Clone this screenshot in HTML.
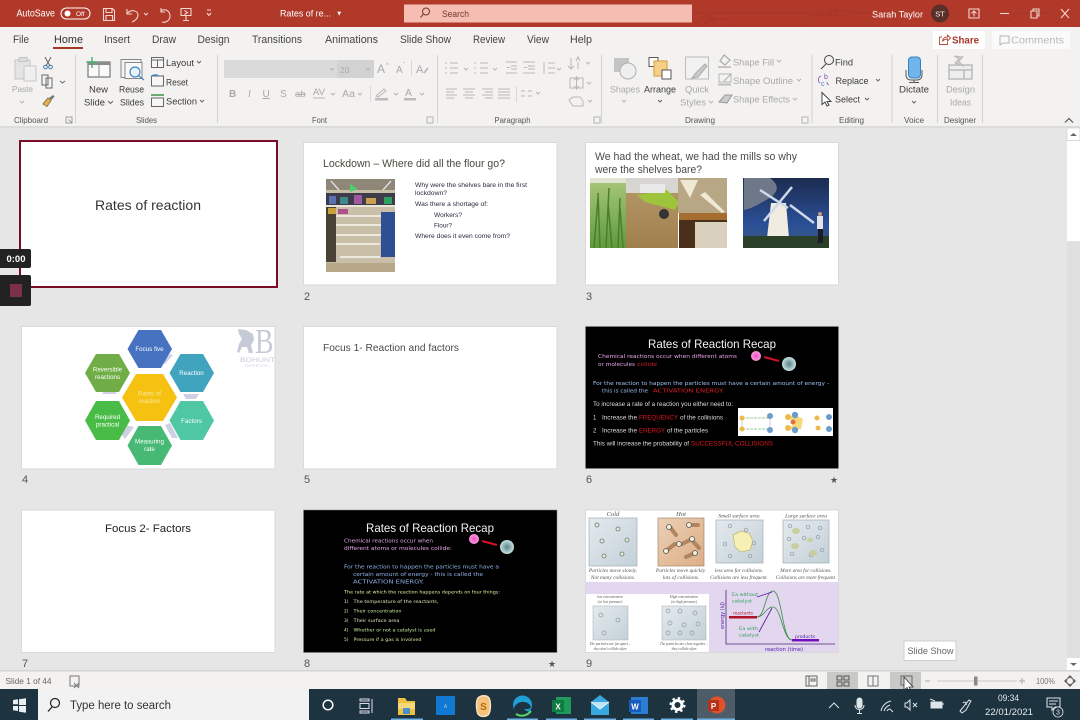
<!DOCTYPE html>
<html lang="en"><head><meta charset="utf-8"><title>Rates of reaction</title>
<style>
html,body{margin:0;padding:0;width:1080px;height:720px;overflow:hidden;background:#e6e6e6}
svg{display:block;filter:blur(.3px)}
text{font-family:"Liberation Sans",Arial,sans-serif;font-size:10.5px;fill:#444}
.w text,text.w{fill:#fff}
.lbl{font-size:8.5px;fill:#555}
.g{fill:#a9a9a9}
.d{fill:#3c3c3c}
.tab{font-size:10.8px;fill:#444}
.c{font-family:"DejaVu Sans",sans-serif;font-size:5.2px}
.ar{font-size:6px;fill:#ddd}
.ser{font-family:"Liberation Serif",serif;font-style:italic;font-size:6.5px;fill:#555}
.ico{fill:none;stroke:#666;stroke-width:1}
.gi{fill:none;stroke:#b5b5b5;stroke-width:1}
.hx{font-size:6.2px;fill:#fff;text-anchor:middle}
</style></head><body>
<svg width="1080" height="720" viewBox="0 0 1080 720" xmlns="http://www.w3.org/2000/svg">
<defs>
<linearGradient id="pb" x1="0" y1="0" x2="1" y2="1"><stop offset="0" stop-color="#e4eaee"/><stop offset="1" stop-color="#c3d0d7"/></linearGradient>
<linearGradient id="hot" x1="0" y1="0" x2="1" y2="1"><stop offset="0" stop-color="#eccfb5"/><stop offset="1" stop-color="#dcae86"/></linearGradient>
<linearGradient id="sky" x1="0" y1="0" x2="0" y2="1"><stop offset="0" stop-color="#1c2c50"/><stop offset=".65" stop-color="#2a4f97"/><stop offset="1" stop-color="#3a5a80"/></linearGradient>
<linearGradient id="whe" x1="0" y1="0" x2="0" y2="1"><stop offset="0" stop-color="#a9c77a"/><stop offset="1" stop-color="#5f9a3c"/></linearGradient>
<linearGradient id="fld" x1="0" y1="0" x2="0" y2="1"><stop offset="0" stop-color="#b59a6a"/><stop offset="1" stop-color="#a07f4c"/></linearGradient>
<radialGradient id="pk"><stop offset="0" stop-color="#f04fc0"/><stop offset="1" stop-color="#f79ae0"/></radialGradient>
<radialGradient id="bl"><stop offset="0" stop-color="#5b8288"/><stop offset="1" stop-color="#c5e2e0"/></radialGradient>
</defs>
<rect width="1080" height="720" fill="#e6e6e6"/>

<!-- title bar -->
<rect width="1080" height="27" fill="#b0392a"/>
<g fill="none" stroke="#a83528" stroke-width="1"><path d="M692 13H830l3-3h14l3 3h70M700 27l10-8h16l8 8M800 27l14-12h30M1000 27l18-14h30l14-13"/><circle cx="706" cy="24" r="8"/><circle cx="833" cy="11" r="4"/></g>
<g class="w">
<text x="16.5" y="16.5" style="font-size:10px" textLength="38.5">AutoSave</text>
<rect x="61" y="8" width="29" height="11" rx="5.5" fill="none" stroke="#fff"/><circle cx="67.500" cy="13.500" r="3" fill="#fff"/>
<text x="76" y="16" style="font-size:6.5px">Off</text>
<text x="280" y="16.5" style="font-size:9.5px" textLength="51">Rates of re...</text>
<text x="336" y="15.5" style="font-size:6.500px">▼</text>
<text x="872" y="17.5" style="font-size:9.5px" textLength="51">Sarah Taylor</text>
</g>
<g fill="none" stroke="#f2d6d0" stroke-width="1.1">
<path d="M103.500 8.500h9l2 2v10h-11zM106 8.500v4h6v-4M106 20.500v-5h6.500v5"/>
<path d="M127 9v5h5M127 14c3-5 11-4 11 1 0 3-3 6-6 7"/><path d="M144 13l2 2 2-2"/>
<path d="M167 11c-4-3-9 0-9 5s5 7 8 6M167 8v4h-4" transform="matrix(-1 0 0 1 328 0)"/>
<path d="M181 8.500h10v7h-10zM186 15.500v5M183 20.500h6M184.500 10.500l3 2-3 2"/>
<path d="M207 13l2 2.500 2-2.500M207 10h4"/>
<path d="M969 9h10v9h-10zM974 16.500v-5M971.500 13.500l2.500-2.500 2.500 2.500"/>
<path d="M1000 13.500h9"/>
<path d="M1031 11h6v7h-6zM1033 11V9h6v7h-2"/>
<path d="M1061 9l8 9M1069 9l-8 9"/>
</g>
<circle cx="940" cy="13.500" r="9" fill="#5a2f28"/><text x="940" y="16.500" text-anchor="middle" style="font-size:7.5px;fill:#eee">ST</text>
<rect x="404" y="4.500" width="288" height="18" fill="#f6bdb2"/>
<g fill="none" stroke="#6e3a30" stroke-width="1"><circle cx="426" cy="11.500" r="3.500"/><path d="M423.500 14l-3 3.500"/></g>
<text x="442" y="17" style="font-size:9.500px;fill:#6b3b33" textLength="27">Search</text>

<!-- ribbon -->
<rect y="27" width="1080" height="100" fill="#f3f2f0"/>
<rect y="126" width="1080" height="2" fill="#dcdcd8"/>
<text class="tab" x="13" y="43" textLength="16">File</text>
<text class="tab" x="54" y="43" textLength="29" style="fill:#333">Home</text>
<rect x="53" y="47" width="30" height="2" fill="#a4372a"/>
<text class="tab" x="104" y="43" textLength="26">Insert</text>
<text class="tab" x="152" y="43" textLength="24">Draw</text>
<text class="tab" x="197.500" y="43" textLength="32">Design</text>
<text class="tab" x="252" y="43" textLength="50">Transitions</text>
<text class="tab" x="325" y="43" textLength="53">Animations</text>
<text class="tab" x="400" y="43" textLength="51">Slide Show</text>
<text class="tab" x="473" y="43" textLength="32">Review</text>
<text class="tab" x="527" y="43" textLength="22">View</text>
<text class="tab" x="570" y="43" textLength="22">Help</text>
<rect x="933" y="31" width="52" height="18" fill="#fff"/>
<path d="M939.500 37h2.500M939.500 37v7.500h8v-2.500M942.500 41c0-2.500 2.500-4 5-4v-2l3 3-3 3v-2c-2 0-3.500 .8-5 2z" fill="none" stroke="#b4493a" stroke-width=".9"/>
<text x="952" y="43.500" style="font-size:10.500px;fill:#a9362a;font-weight:bold" textLength="27">Share</text>
<rect x="992" y="31" width="78" height="18" fill="#fafafa"/>
<path d="M1000 36h9v7h-6l-3 2z" class="gi"/>
<text x="1011" y="43.500" style="font-size:10.500px;fill:#b9b9b9" textLength="53">Comments</text>
<g fill="#d3d3d0"><rect x="75" y="55" width="1" height="68"/><rect x="217" y="55" width="1" height="68"/><rect x="437" y="55" width="1" height="68"/><rect x="601" y="55" width="1" height="68"/><rect x="811.500" y="55" width="1" height="68"/><rect x="891.500" y="55" width="1" height="68"/><rect x="937" y="55" width="1" height="68"/><rect x="982" y="55" width="1" height="68"/></g>

<!-- clipboard -->
<path d="M15 60h15v19H15z" fill="#e4e4e4" stroke="#c5c5c5"/><rect x="19" y="57.500" width="8" height="4" fill="#dcdcdc" stroke="#c5c5c5"/><rect x="24" y="66" width="12" height="15" fill="#efefef" stroke="#c5c5c5"/>
<text class="g" x="12" y="92" style="font-size:8.500px" textLength="21">Paste</text>
<path d="M20 101l2 2 2-2" class="gi"/>
<path d="M45 57l5 9M51 57l-5 9" fill="none" stroke="#666"/><circle cx="45.500" cy="67" r="1.800" fill="none" stroke="#4a78b0"/><circle cx="50.500" cy="67" r="1.800" fill="none" stroke="#4a78b0"/>
<path d="M42 75h6v10h-6zM46 78h6v10h-6z" fill="#f5f5f5" stroke="#666"/>
<path d="M60 81l2.500 2 2.500-2" class="ico"/>
<path d="M43 104l5-6 3 2.500-4 6z" fill="#e8b34a" stroke="#8a7a50"/><path d="M49 98l4-3 1.500 1.500-3 3.500z" fill="#777"/>
<text class="lbl" x="14" y="123" textLength="34">Clipboard</text>
<path d="M66 117h6v6h-6zM68.500 119.500l3 3" fill="none" stroke="#888" stroke-width=".8"/>

<!-- slides -->
<rect x="88" y="62" width="22" height="15" fill="#fafafa" stroke="#777" stroke-width="1.200"/><rect x="88" y="62" width="22" height="3" fill="#8c8c8c"/><path d="M99 65v12" stroke="#888"/>
<path d="M92 57v11M86.500 62h11" stroke="#4cae6e" stroke-width="1.400"/>
<text class="d" x="89" y="92.500" style="font-size:9px" textLength="19">New</text>
<text class="d" x="84" y="105.500" style="font-size:9px" textLength="21">Slide</text><path d="M108 101l2.500 2.500 2.500-2.500" class="ico"/>
<rect x="121" y="59.500" width="20" height="18" fill="#f4f4f4" stroke="#888"/><rect x="125" y="62.500" width="17" height="16" fill="#fafafa" stroke="#888"/>
<circle cx="135" cy="72" r="5" fill="#eaf3fa" stroke="#3f86c4" stroke-width="1.200"/><path d="M139 76l5 4" stroke="#3f86c4" stroke-width="1.200"/>
<text class="d" x="119" y="92.500" style="font-size:9px" textLength="25">Reuse</text>
<text class="d" x="120" y="105.500" style="font-size:9px" textLength="24">Slides</text>
<rect x="151.500" y="57.500" width="12" height="10" fill="#f6f6f6" stroke="#666"/><path d="M151.500 60h12M157.500 60v7.500" stroke="#666"/>
<text class="d" x="166" y="66" style="font-size:9px" textLength="28">Layout</text><path d="M197 61l2 2 2-2" class="ico"/>
<rect x="151.500" y="76" width="12" height="10" fill="#f6f6f6" stroke="#666"/><path d="M151 77a5 4 0 0 1 8-1" stroke="#3f86c4" fill="none" stroke-width="1.200"/>
<text class="d" x="166" y="85.500" style="font-size:9px" textLength="22">Reset</text>
<rect x="151.500" y="98" width="12" height="8.500" fill="#f6f6f6" stroke="#666"/><rect x="151" y="94" width="13" height="2" fill="#6aaa70"/>
<text class="d" x="166" y="104.500" style="font-size:9px" textLength="31">Section</text><path d="M200 100l2 2 2-2" class="ico"/>
<text class="lbl" x="136" y="123" textLength="21">Slides</text>

<!-- font -->
<rect x="224" y="60" width="113" height="18" fill="#dadada"/><rect x="337" y="60" width="37" height="18" fill="#d2d2d2"/>
<path d="M330 68l2 2 2-2M366 68l2 2 2-2" class="gi"/>
<text x="340" y="73" style="font-size:8.500px;fill:#aaa">20</text>
<text class="g" x="377" y="73" style="font-size:12px">A</text><text class="g" x="386" y="67" style="font-size:6px">^</text><text class="g" x="396" y="73" style="font-size:10px">A</text><text class="g" x="403" y="67" style="font-size:6px">ˇ</text><text class="g" x="416" y="73" style="font-size:11px">A</text>
<path d="M424 73l4-5" stroke="#c2a9c8" stroke-width="1.500"/><rect x="411" y="60" width="1" height="16" fill="#d8d8d8"/>
<text class="g" x="229" y="97" style="font-size:10px;font-weight:bold">B</text><text class="g" x="248" y="97" style="font-size:10px;font-style:italic">I</text><text class="g" x="262.500" y="97" style="font-size:10px;text-decoration:underline">U</text><text class="g" x="280" y="97" style="font-size:10px">S</text><text class="g" x="295" y="97" style="font-size:9.500px;text-decoration:line-through">ab</text><text class="g" x="313" y="95" style="font-size:9.500px">AV</text><text class="g" x="342" y="97" style="font-size:10px" textLength="13">Aa</text>
<path d="M313 98h12M331 93l2 2 2-2M358 93l2 2 2-2M394 93l2 2 2-2M420 93l2 2 2-2" class="gi"/>
<rect x="370" y="86" width="1" height="16" fill="#d8d8d8"/>
<path d="M376 96l8-7 2 2-8 6z" class="gi"/><rect x="375" y="98" width="13" height="2.500" fill="#bcbcbc"/>
<text class="g" x="405" y="96" style="font-size:10.500px">A</text><rect x="404" y="98" width="12" height="2.500" fill="#bcbcbc"/>
<text class="lbl" x="312" y="123" textLength="15">Font</text>
<path d="M427 117h6v6h-6z" class="gi"/>

<!-- paragraph -->
<g fill="none" stroke="#b8b8b8">
<path d="M450 63h8M450 68h8M450 73h8M445 63h2M445 68h2M445 73h2M464 68l2 2 2-2"/>
<path d="M480 63h8M480 68h8M480 73h8M474 63h2M474 68h2M474 73h2M493 68l2 2 2-2"/>
<path d="M506 62h11M511 66h6M511 69h6M506 73h11M507 67.500h3"/>
<path d="M523 62h12M528 66h7M528 69h7M523 73h12M524 67.500h3"/>
<path d="M548 63h7M548 68h7M548 73h7M544 62v12M557 68l2 2 2-2"/>
<path d="M571 58v11M568 66l3 3 3-3M578 62v7M586 62l2 2 2-2M576 61l2-4 2 4"/>
<path d="M570 78h13v10h-13zM576.500 76v14M574 80l2.500-2 2.500 2M574 86l2.500 2 2.500-2M587 82l2 2 2-2"/>
<path d="M569 100l4-3h7l3 4v5h-10zM588 100l2 2 2-2"/>
<path d="M446 89h11M446 92h8M446 95h11M446 98h8"/>
<path d="M463 89h12M465 92h8M463 95h12M465 98h8"/>
<path d="M482 89h11M485 92h8M482 95h11M485 98h8"/>
<path d="M498 89h12M498 92h12M498 95h12M498 98h12"/>
<path d="M521 91h4M528 91h4M521 96h4M528 96h4M536 92l2 2 2-2"/>
</g>
<rect x="516" y="86" width="1" height="16" fill="#d8d8d8"/>
<text class="lbl" x="494.500" y="123" textLength="36">Paragraph</text>
<path d="M594 117h6v6h-6z" class="gi"/>

<!-- drawing -->
<rect x="614" y="58" width="15" height="14" fill="#c4c4c4"/><circle cx="628" cy="71" r="8" fill="#efefef" stroke="#b0b0b0"/>
<text class="g" x="610" y="92.500" style="font-size:9px" textLength="30">Shapes</text><path d="M622 100l2 2 2-2" class="gi"/>
<rect x="649" y="57.500" width="9" height="9" fill="#fff" stroke="#555"/><rect x="654" y="61" width="13" height="15" fill="#f6cf86" stroke="#d59b3a"/><rect x="662" y="70" width="9" height="9" fill="#fff" stroke="#555"/>
<text class="d" x="644" y="92.500" style="font-size:9px" textLength="32">Arrange</text><path d="M658 100l2 2 2-2" class="ico"/>
<rect x="685.500" y="57" width="23" height="22" fill="#f2f2f2" stroke="#bbb"/><path d="M692 78l3-4 10-10 2 2-9 11z" fill="#ccc" stroke="#aaa"/>
<text class="g" x="685" y="92.500" style="font-size:9px" textLength="24">Quick</text><text class="g" x="680" y="105.500" style="font-size:9px" textLength="26">Styles</text><path d="M709 101l2 2 2-2" class="gi"/>
<path d="M724 55l6 5-5 5-5-4zM718 67h13" fill="none" stroke="#aaa" stroke-width="1.200"/>
<text class="g" x="733" y="65.500" style="font-size:9px" textLength="41">Shape Fill</text><path d="M777 60l2 2 2-2" class="gi"/>
<rect x="719" y="74" width="12" height="8" class="gi"/><path d="M724 81l7-7" stroke="#aaa"/><rect x="718" y="83.500" width="13" height="2" fill="#bdbdbd"/>
<text class="g" x="733" y="84" style="font-size:9px" textLength="60">Shape Outline</text><path d="M797 79l2 2 2-2" class="gi"/>
<path d="M719 102l6-7h7l-5 8z" fill="#ccc" stroke="#999"/>
<text class="g" x="733" y="102.500" style="font-size:9px" textLength="57">Shape Effects</text><path d="M793 98l2 2 2-2" class="gi"/>
<text class="lbl" x="685" y="123" textLength="30">Drawing</text>
<path d="M802 117h6v6h-6z" class="gi"/>

<!-- editing -->
<circle cx="829" cy="60" r="4.500" fill="none" stroke="#444"/><path d="M826 64l-5 5" stroke="#444"/>
<text class="d" x="835" y="65.500" style="font-size:9px" textLength="18">Find</text>
<text x="824" y="79" style="font-size:7px;fill:#8a4bb0">b</text><text x="821" y="86" style="font-size:7px;fill:#4a86c0">c</text>
<path d="M821 76a4 4 0 0 0-1 7M827 82a3 3 0 0 0 2 3" stroke="#8a4bb0" fill="none" stroke-width=".8"/>
<text class="d" x="835.500" y="84" style="font-size:9px" textLength="33">Replace</text><path d="M876 79l2 2 2-2" class="ico"/>
<path d="M822 92.500v12l3-2.500 2 4 2-1-2-3.500h4z" fill="#fff" stroke="#444"/>
<text class="d" x="835" y="102.500" style="font-size:9px" textLength="25">Select</text><path d="M865 98l2 2 2-2" class="ico"/>
<text class="lbl" x="839" y="123" textLength="25">Editing</text>

<!-- voice -->
<rect x="908.500" y="57" width="12" height="21" rx="3.500" fill="#6fb4ea" stroke="#3b7fc0"/><path d="M906 70v5c0 3 2 5 5 5h6c3 0 5-2 5-5v-5M914 80v2M909 82.500h10" fill="none" stroke="#555"/>
<text class="d" x="899" y="92.500" style="font-size:9px" textLength="30">Dictate</text><path d="M912 101l2 2 2-2" class="ico"/>
<text class="lbl" x="904" y="123" textLength="20">Voice</text>
<path d="M949 65h23v14h-23zM949 70h23M964 70v9" fill="#eeeeee" stroke="#bbb" stroke-width="1.500"/><path d="M954 56l5 3-4 4 8 3-4-5 4-4z" fill="#ccc" stroke="#bbb"/>
<text class="g" x="946" y="92.500" style="font-size:9px" textLength="29">Design</text><text class="g" x="950" y="105.500" style="font-size:9px" textLength="21">Ideas</text>
<text class="lbl" x="944" y="123" textLength="32">Designer</text>
<path d="M1065 122.500l4-4 4 4" fill="none" stroke="#555" stroke-width="1.200"/>

<!-- scrollbar -->
<rect x="1067" y="128" width="13" height="542" fill="#e0e0e0"/>
<rect x="1067" y="128" width="13" height="12.500" fill="#fff" stroke="#d0d0d0" stroke-width=".7"/>
<path d="M1070 136l3.500-3 3.500 3z" fill="#666"/>
<rect x="1067" y="141" width="13" height="100" fill="#fff"/>
<rect x="1067" y="658" width="13" height="12" fill="#fff"/><path d="M1070 663l3.500 3 3.500-3z" fill="#666"/>

<!-- slide 1 -->
<rect x="20" y="141" width="257" height="146" fill="#fff" stroke="#7b0c26" stroke-width="2"/>
<text x="95" y="210" style="font-size:14px;fill:#333" textLength="106">Rates of reaction</text>

<!-- slide 2 -->
<rect x="303.500" y="142.500" width="253.500" height="142.500" fill="#fff" stroke="#dadada"/>
<text x="323" y="167" style="font-size:11px;fill:#4a4a3c" textLength="182">Lockdown – Where did all the flour go?</text>
<rect x="326" y="179" width="69" height="93" fill="#c9bfa9"/>
<rect x="326" y="179" width="69" height="11" fill="#8f8878"/><path d="M331 181l8 9M391 181l-8 9" stroke="#ddd" stroke-width="1.500"/><path d="M350 184l8 5-8 3z" fill="#4cd070"/>
<rect x="326" y="193" width="69" height="12" fill="#3e3c4a"/>
<rect x="326" y="205" width="69" height="2" fill="#e9e5da"/><rect x="331" y="215" width="58" height="2" fill="#ece8dd"/><rect x="333" y="224" width="54" height="2" fill="#ece8dd"/><rect x="336" y="234" width="47" height="2" fill="#ece8dd"/><rect x="336" y="243" width="44" height="2" fill="#ece8dd"/><rect x="340" y="256" width="40" height="2" fill="#ece8dd"/>
<rect x="326" y="207" width="10" height="55" fill="#4a4136"/><rect x="381" y="212" width="14" height="45" fill="#2f4f93"/>
<rect x="328" y="208" width="8" height="6" fill="#c9a13a"/><rect x="338" y="209" width="10" height="5" fill="#b0508a"/><rect x="329" y="196" width="7" height="8" fill="#5a70b0"/><rect x="340" y="197" width="8" height="7" fill="#3c8a8a"/><rect x="354" y="195" width="8" height="9" fill="#a058a0"/><rect x="366" y="198" width="10" height="6" fill="#c8a050"/><rect x="384" y="197" width="8" height="7" fill="#30a060"/>
<rect x="326" y="263" width="69" height="9" fill="#b8a88a"/>
<text x="415" y="187" style="font-size:6.500px;fill:#2a2a3c" textLength="112">Why were the shelves bare in the first</text>
<text x="415" y="195" style="font-size:6.500px;fill:#2a2a3c" textLength="32">lockdown?</text>
<text x="415" y="206" style="font-size:6.500px;fill:#2a2a3c" textLength="73">Was there a shortage of:</text>
<text x="434" y="217" style="font-size:6.500px;fill:#2a2a3c" textLength="28">Workers?</text>
<text x="434" y="227.500" style="font-size:6.500px;fill:#2a2a3c" textLength="18">Flour?</text>
<text x="415" y="238" style="font-size:6.500px;fill:#2a2a3c" textLength="95">Where does it even come from?</text>
<text x="304" y="300" style="font-size:11px;fill:#555">2</text>

<!-- slide 3 -->
<rect x="585.500" y="142.500" width="253" height="142.500" fill="#fff" stroke="#dadada"/>
<text x="595" y="160" style="font-size:11px;fill:#4a4a4a" textLength="202">We had the wheat, we had the mills so why</text>
<text x="595" y="173" style="font-size:11px;fill:#4a4a4a" textLength="107">were the shelves bare?</text>
<rect x="590" y="178" width="36" height="70" fill="url(#whe)"/>
<path d="M594 248l4-50M600 248l-2-55M606 248l3-60M612 248l-4-45M618 248l2-50M623 248l-3-40" stroke="#487f2c" stroke-width="1.500" fill="none"/>
<rect x="590" y="178" width="36" height="5" fill="#dfe5d2"/>
<rect x="626" y="178" width="52" height="70" fill="url(#fld)"/>
<rect x="626" y="178" width="52" height="15" fill="#d8d6d2"/>
<path d="M637 195l30-5 12 12-4 8-30-8z" fill="#9ec43c"/><rect x="640" y="184" width="25" height="9" fill="#e9e9e9"/><circle cx="664" cy="214" r="5" fill="#333"/>
<rect x="678" y="178" width="49" height="35" fill="#b8a784"/><path d="M680 180l10 18 8-18zM705 192l20 20-3 1-22-18z" fill="#efe8d4"/>
<rect x="679" y="213" width="48" height="35" fill="#4a2f1a"/><rect x="695" y="222" width="32" height="26" fill="#d9d0bd"/><rect x="679" y="213" width="48" height="7" fill="#a66d30"/>
<rect x="743" y="178" width="86" height="70" fill="url(#sky)"/>
<path d="M744 178h26c8 6 10 12 0 20-8 4-16 10-26 12z" fill="#6f7888"/>
<path d="M771 203h15l3 35h-22z" fill="#f1ece2"/>
<path d="M760 190l28 18M792 187l-28 34M790 205l24 18" stroke="#cfd8e8" stroke-width="2.500" fill="none"/>
<rect x="743" y="236" width="86" height="12" fill="#2a4028"/>
<rect x="817" y="216" width="6" height="13" fill="#e4e4e8"/><rect x="818" y="229" width="5" height="14" fill="#1d1d26"/><circle cx="820" cy="214" r="2" fill="#c89a80"/>
<text x="586" y="300" style="font-size:11px;fill:#555">3</text>

<!-- slide 4 -->
<rect x="21.500" y="326.500" width="253.500" height="142.500" fill="#fff" stroke="#dadada"/>
<path d="M162 363l8-9 3 1-8 9zM102 394h15l-3-4h-9zM183 394h16l-3 5h-10zM125 425l9 2-9 12-3-4zM165 425l7 13h6l-8-15z" fill="#c9cbe0" opacity=".9"/>
<text x="255" y="353" style="font-family:'Liberation Serif',serif;font-size:35px;fill:#c6cad6" textLength="18.500">B</text>
<path d="M238 329l8 1 7 4 1 6-3 5 2 8-4 0-2-6-5 0-3 6-2-1 2-8 3-5-3-5z" fill="#c6cad6"/>
<text x="240" y="362" style="font-size:6px;fill:#c6cad6" textLength="35">BOHUNT</text>
<text x="245" y="366.500" style="font-size:3px;fill:#c6cad6" textLength="24">SCHOOL</text>
<polygon points="127.500,349 138.500,330 161,330 172,349 161,368 138.500,368" fill="#4672c1"/>
<polygon points="169.500,373 180.500,354 203,354 214,373 203,392 180.500,392" fill="#41a4bf"/>
<polygon points="85,373 96,354 119,354 130,373 119,392 96,392" fill="#70ad47"/>
<polygon points="122,397.500 136,374 163,374 177,397.500 163,421 136,421" fill="#f5c211"/>
<polygon points="85,420.500 96,401 119,401 130,420.500 119,440 96,440" fill="#49bc47"/>
<polygon points="169.500,420.500 180.500,401 203,401 214,420.500 203,440 180.500,440" fill="#4fc7a5"/>
<polygon points="127.500,445.500 138.500,426 161,426 172,445.500 161,465 138.500,465" fill="#47b975"/>
<text class="hx" x="149.500" y="351">Focus five</text>
<text class="hx" x="191.500" y="375">Reaction</text>
<text class="hx" x="107.500" y="371.500">Reversible</text><text class="hx" x="107.500" y="379">reactions</text>
<text class="hx" x="149.500" y="395.500" style="fill:#fbe79a">Rates of</text><text class="hx" x="149.500" y="403" style="fill:#fbe79a">reaction</text>
<text class="hx" x="107.500" y="419">Required</text><text class="hx" x="107.500" y="426.500">practical</text>
<text class="hx" x="191.500" y="423">Factors</text>
<text class="hx" x="149.500" y="443.500">Measuring</text><text class="hx" x="149.500" y="451">rate</text>
<text x="22" y="483" style="font-size:11px;fill:#555">4</text>

<!-- slide 5 -->
<rect x="303.500" y="326.500" width="253.500" height="142.500" fill="#fff" stroke="#dadada"/>
<text x="323" y="351" style="font-size:10.500px;fill:#4a4a4a" textLength="136">Focus 1- Reaction and factors</text>
<text x="304" y="483" style="font-size:11px;fill:#555">5</text>

<!-- slide 6 -->
<rect x="585.500" y="326.500" width="253" height="142" fill="#000" stroke="#888" stroke-width=".5"/>
<text x="648" y="348" style="font-size:11.800px;fill:#f2f2f2" textLength="128">Rates of Reaction Recap</text>
<text class="c" x="598" y="358" style="fill:#e9a6ea" textLength="139">Chemical reactions occur when different atoms</text>
<text class="c" x="598" y="366" style="fill:#e9a6ea" textLength="37">or molecules</text>
<text class="c" x="637" y="366" style="fill:#d01a2a" textLength="20">collide</text>
<text class="c" x="593" y="385" style="fill:#9cc0f0" textLength="236">For the reaction to happen the particles must have a certain amount of energy -</text>
<text class="c" x="602" y="392.500" style="fill:#9cc0f0" textLength="46">this is called the</text>
<text class="c" x="653" y="392.500" style="fill:#e01a20" textLength="71">ACTIVATION ENERGY.</text>
<text class="ar" x="593" y="406" textLength="140">To increase a rate of a reaction you either need to:</text>
<text class="ar" x="593" y="419.500">1</text><text class="ar" x="602" y="419.500" textLength="35">Increase the</text>
<text class="ar" x="639" y="419.500" style="fill:#e01a20" textLength="39">FREQUENCY</text>
<text class="ar" x="680" y="419.500" textLength="43">of the collisions</text>
<text class="ar" x="593" y="432.500">2</text><text class="ar" x="602" y="432.500" textLength="35">Increase the</text>
<text class="ar" x="639" y="432.500" style="fill:#e01a20" textLength="26">ENERGY</text>
<text class="ar" x="667" y="432.500" textLength="41">of the particles</text>
<text class="ar" x="593" y="445.500" textLength="96">This will increase the probability of</text>
<text class="ar" x="691" y="445.500" style="fill:#e01a20" textLength="82">SUCCESSFUL COLLISIONS</text>
<circle cx="756" cy="356" r="5" fill="url(#pk)"/><circle cx="789" cy="364" r="7" fill="url(#bl)"/>
<path d="M764 357l15 4" stroke="#d4102a" stroke-width="2"/>
<rect x="738" y="408" width="95" height="28" fill="#fff"/>
<path d="M742 418h28M742 429h28" stroke="#7ab87a" stroke-width=".8" stroke-dasharray="3 1"/>
<path d="M742 418v11M770 416v14" stroke="#c8a0c0" stroke-width=".6"/>
<path d="M787 417l8 5-6 7 12 0 2-10-8-4z" fill="#f7d878"/>
<g fill="#f0b848"><circle cx="742" cy="418" r="2.500"/><circle cx="742" cy="429" r="2.500"/><circle cx="788" cy="417" r="3"/><circle cx="788" cy="428" r="3"/><circle cx="817" cy="418" r="2.500"/><circle cx="818" cy="428" r="2.500"/></g>
<g fill="#6a9ccc"><circle cx="770" cy="416" r="3"/><circle cx="770" cy="430" r="3"/><circle cx="795" cy="415" r="3.200"/><circle cx="795" cy="430" r="3.200"/><circle cx="829" cy="417" r="3"/><circle cx="829" cy="429" r="3"/></g>
<circle cx="793" cy="422" r="2.500" fill="#e07040"/>
<text x="586" y="483" style="font-size:11px;fill:#555">6</text>
<text x="830" y="483" style="font-size:9px;fill:#555">★</text>

<!-- slide 7 -->
<rect x="21.500" y="510" width="253.500" height="142.500" fill="#fff" stroke="#dadada"/>
<text x="105" y="532" style="font-size:11px;fill:#222" textLength="86">Focus 2- Factors</text>
<text x="22" y="667" style="font-size:11px;fill:#555">7</text>

<!-- slide 8 -->
<rect x="303.500" y="510" width="253.500" height="142.500" fill="#000" stroke="#888" stroke-width=".5"/>
<text x="366" y="532" style="font-size:11.800px;fill:#f2f2f2" textLength="128">Rates of Reaction Recap</text>
<text class="c" x="344" y="542.500" style="fill:#e9a6ea" textLength="89">Chemical reactions occur when</text>
<text class="c" x="344" y="550" style="fill:#e9a6ea" textLength="108">different atoms or molecules collide:</text>
<text class="c" x="344" y="568.500" style="fill:#8fb4ec" textLength="155">For the reaction to happen the particles must have a</text>
<text class="c" x="353" y="576" style="fill:#8fb4ec" textLength="130">certain amount of energy - this is called the</text>
<text class="c" x="353" y="583.500" style="fill:#8fb4ec" textLength="71">ACTIVATION ENERGY.</text>
<text class="c" x="344" y="593.500" style="fill:#e5f0a0;font-size:4.400px" textLength="156">The rate at which the reaction happens depends on four things:</text>
<text class="c" x="344" y="603" style="fill:#e8e8c0;font-size:4.400px">1)</text><text class="c" x="353.500" y="603" style="fill:#e8e8c0;font-size:4.400px" textLength="85">The temperature of the reactants,</text>
<text class="c" x="344" y="612.500" style="fill:#c8f0a0;font-size:4.400px">2)</text><text class="c" x="353.500" y="612.500" style="fill:#c8f0a0;font-size:4.400px" textLength="48">Their concentration</text>
<text class="c" x="344" y="622" style="fill:#e8e8c0;font-size:4.400px">3)</text><text class="c" x="353.500" y="622" style="fill:#e8e8c0;font-size:4.400px" textLength="46">Their surface area</text>
<text class="c" x="344" y="631.500" style="fill:#c8f0a0;font-size:4.400px">4)</text><text class="c" x="353.500" y="631.500" style="fill:#c8f0a0;font-size:4.400px" textLength="82">Whether or not a catalyst is used</text>
<text class="c" x="344" y="641" style="fill:#e8e8a0;font-size:4.400px">5)</text><text class="c" x="353.500" y="641" style="fill:#e8e8a0;font-size:4.400px" textLength="68">Pressure if a gas is involved</text>
<circle cx="474" cy="539" r="5" fill="url(#pk)"/><circle cx="507" cy="547" r="7" fill="url(#bl)"/>
<path d="M482 541l15 4" stroke="#d4102a" stroke-width="2"/>
<text x="304" y="667" style="font-size:11px;fill:#555">8</text>
<text x="548" y="667" style="font-size:9px;fill:#555">★</text>

<!-- slide 9 -->
<rect x="585.500" y="510" width="253" height="142.500" fill="#fff" stroke="#dadada"/>
<rect x="586" y="582" width="252" height="70" fill="#e3d6ef"/>
<rect x="586" y="594" width="123" height="58" fill="#fff"/>
<rect x="589" y="518" width="48" height="48" fill="url(#pb)" stroke="#a0aeb8" stroke-width=".7"/>
<rect x="658" y="518" width="46" height="48" fill="url(#hot)" stroke="#a08870" stroke-width=".7"/>
<rect x="716" y="520" width="47" height="43" fill="url(#pb)" stroke="#a0aeb8" stroke-width=".7"/>
<rect x="783" y="520" width="46" height="43" fill="url(#pb)" stroke="#a0aeb8" stroke-width=".7"/>
<rect x="593" y="606" width="35" height="34" fill="url(#pb)" stroke="#aaa" stroke-width=".5"/>
<rect x="662" y="606" width="44" height="34" fill="url(#pb)" stroke="#aaa" stroke-width=".5"/>
<g fill="#e2ead0" stroke="#6a7a80" stroke-width=".8"><circle cx="597" cy="525" r="2"/><circle cx="618" cy="529" r="2"/><circle cx="602" cy="541" r="2"/><circle cx="627" cy="540" r="2"/><circle cx="604" cy="556" r="2"/><circle cx="622" cy="554" r="2"/></g>
<g stroke="#b08560" stroke-width="4" stroke-linecap="round"><path d="M670 527l6 8M693 525h5M666 551l9-7M682 544l8-4M691 539l8 9M686 557l9-4"/></g>
<g fill="#eef0d8" stroke="#555" stroke-width=".8"><circle cx="669" cy="527" r="2.500"/><circle cx="689" cy="525" r="2.500"/><circle cx="666" cy="551" r="2.500"/><circle cx="679" cy="544" r="2.500"/><circle cx="692" cy="539" r="2.500"/><circle cx="695" cy="553" r="2.500"/></g>
<path d="M733 535l8-4 8 2 4 8-3 9-9 2-6-5-1-6z" fill="#f6f0b4" stroke="#b8b470" stroke-width=".7"/>
<g fill="none" stroke="#8a9aa0" stroke-width=".7"><circle cx="730" cy="526" r="1.800"/><circle cx="746" cy="530" r="1.800"/><circle cx="725" cy="544" r="1.800"/><circle cx="754" cy="543" r="1.800"/><circle cx="730" cy="556" r="1.800"/><circle cx="750" cy="556" r="1.800"/><circle cx="790" cy="526" r="1.800"/><circle cx="808" cy="527" r="1.800"/><circle cx="820" cy="528" r="1.800"/><circle cx="789" cy="539" r="1.800"/><circle cx="804" cy="538" r="1.800"/><circle cx="818" cy="537" r="1.800"/><circle cx="792" cy="554" r="1.800"/><circle cx="822" cy="550" r="1.800"/><circle cx="811" cy="555" r="1.800"/><circle cx="601" cy="615" r="2"/><circle cx="618" cy="620" r="2"/><circle cx="604" cy="633" r="2"/><circle cx="668" cy="611" r="2"/><circle cx="680" cy="611" r="2"/><circle cx="695" cy="613" r="2"/><circle cx="670" cy="623" r="2"/><circle cx="684" cy="625" r="2"/><circle cx="698" cy="624" r="2"/><circle cx="668" cy="633" r="2"/><circle cx="680" cy="633" r="2"/><circle cx="692" cy="633" r="2"/></g>
<g fill="#c9cf9c"><ellipse cx="796" cy="531" rx="4" ry="3"/><ellipse cx="810" cy="540" rx="3" ry="2"/><ellipse cx="795" cy="546" rx="4" ry="3"/><ellipse cx="813" cy="553" rx="4" ry="3"/></g>
<g text-anchor="middle">
<text class="ser" x="613" y="516">Cold</text><text class="ser" x="681" y="516">Hot</text><text class="ser" x="739" y="517.500" style="font-size:5.500px">Small surface area</text><text class="ser" x="806" y="517.500" style="font-size:5.500px">Large surface area</text>
<text class="ser" x="613" y="572" style="font-size:5.400px">Particles move slowly.</text><text class="ser" x="613" y="579" style="font-size:5.400px">Not many collisions.</text>
<text class="ser" x="681" y="572" style="font-size:5.400px">Particles move quickly.</text><text class="ser" x="681" y="579" style="font-size:5.400px">lots of collisions.</text>
<text class="ser" x="739" y="572" style="font-size:5.200px">less area for collisions.</text><text class="ser" x="739" y="579" style="font-size:5.200px">Collisions are less frequent.</text>
<text class="ser" x="806" y="572" style="font-size:5.200px">More area for collisions.</text><text class="ser" x="806" y="579" style="font-size:5.200px">Collisions are more frequent.</text>
<text class="ser" x="610" y="598" style="font-size:3.600px">low concentration</text><text class="ser" x="610" y="603" style="font-size:3.600px">(or low pressure)</text>
<text class="ser" x="684" y="598" style="font-size:3.600px">High concentration</text><text class="ser" x="684" y="603" style="font-size:3.600px">(or high pressure)</text>
<text class="ser" x="610" y="645" style="font-size:3.600px">The particles are far apart –</text><text class="ser" x="610" y="650" style="font-size:3.600px">they don't collide often</text>
<text class="ser" x="684" y="645" style="font-size:3.600px">The particles are close together –</text><text class="ser" x="684" y="650" style="font-size:3.600px">they collide often</text>
</g>
<path d="M726 590v54h109" fill="none" stroke="#4a2a7a" stroke-width=".8"/>
<path d="M757 617C765 617 765 591 773 591C782 591 782 640 792 640" fill="none" stroke="#3a8a4a" stroke-width=".8"/>
<path d="M757 617C764 617 766 607 773 607C781 607 783 640 792 640" fill="none" stroke="#3a8a4a" stroke-width=".8"/>
<rect x="729" y="616" width="28" height="2.500" fill="#b0142a"/>
<rect x="792" y="639" width="27" height="2.500" fill="#7010c0"/>
<path d="M757 597l15-5M759 632l13-24" stroke="#5a20a0" stroke-width=".9"/>
<text class="c" x="732" y="596" style="fill:#2fa060;font-size:4.600px" textLength="26">Ea without</text>
<text class="c" x="732" y="602.500" style="fill:#2fa060;font-size:4.600px" textLength="20">catalyst</text>
<text class="c" x="733" y="614.500" style="fill:#b0142a;font-size:4.400px" textLength="20">reactants</text>
<text class="c" x="739" y="630" style="fill:#2fa060;font-size:4.600px" textLength="19">Ea with</text>
<text class="c" x="739" y="636.500" style="fill:#2fa060;font-size:4.600px" textLength="20">catalyst</text>
<text class="c" x="795" y="638" style="fill:#4a1aa0;font-size:4.500px" textLength="20">products</text>
<text class="c" x="765" y="651" style="fill:#4a1aa0;font-size:4.800px" textLength="38">reaction (time)</text>
<text class="c" transform="translate(724 629) rotate(-90)" style="fill:#4a1aa0;font-size:4.800px" textLength="27">energy (kJ)</text>
<text x="586" y="667" style="font-size:11px;fill:#555">9</text>

<!-- timer -->
<rect x="-3" y="249" width="34" height="19" rx="2" fill="#222"/>
<text x="16" y="262" text-anchor="middle" style="font-size:9.500px;font-weight:bold;fill:#fff">0:00</text>
<rect x="-3" y="275" width="34" height="31" rx="2" fill="#222"/>
<rect x="10" y="284" width="12" height="13" fill="#7c3049"/>

<!-- status bar -->
<rect y="670" width="1080" height="1.500" fill="#d4d4d4"/>
<rect y="671.500" width="1080" height="18" fill="#f3f2f0"/>
<text x="5.500" y="684" style="font-size:8.500px;fill:#666" textLength="46">Slide 1 of 44</text>
<path d="M70 676h9v10h-9zM74 683l5 5M79 683l-5 5" fill="none" stroke="#777"/>
<rect x="827" y="672" width="31" height="17.500" fill="#c9c9c7"/>
<rect x="890" y="672" width="31" height="17.500" fill="#c9c9c7"/>
<path d="M806 676h11v10h-11zM809 676v10M811 679h4v2h-4z" fill="none" stroke="#666"/>
<path d="M837 676h5v4h-5zM844 676h5v4h-5zM837 682h5v4h-5zM844 682h5v4h-5z" fill="none" stroke="#555"/>
<path d="M868 676h5v10h-5zM873 676h5v10h-5z" fill="none" stroke="#777"/>
<path d="M901 676h11v9h-11z" fill="none" stroke="#666"/>
<path d="M925 681h5M1019 681h6M1022 678v6" stroke="#aaa"/>
<rect x="937" y="680.500" width="80" height="1" fill="#c8c8c8"/>
<rect x="974" y="676.500" width="3.500" height="9" fill="#888"/>
<text x="1036" y="684" style="font-size:8.500px;fill:#777" textLength="19">100%</text>
<path d="M1070 675l2.500 2.500h-5zM1070 687l2.500-2.500h-5zM1064 681l2.500 2.500v-5zM1076 681l-2.500 2.500v-5z" fill="#666"/><circle cx="1070" cy="681" r="3.500" fill="none" stroke="#666"/>
<path d="M904 677v13l3-2.500 2 4 2-1-2-3.500h4z" fill="#fff" stroke="#333" stroke-width=".8"/>
<rect x="904" y="641" width="52" height="19.500" fill="#fff" stroke="#cfcfcf"/>
<text x="907.500" y="654" style="font-size:9.500px;fill:#666" textLength="46">Slide Show</text>

<!-- taskbar -->
<rect y="689" width="1080" height="31" fill="#1e3340"/>
<rect x="697" y="689" width="38" height="31" fill="#4d5c66"/>
<path d="M13 700l5-.7v5h-5zM19 699.200l7-1v6.800h-7zM13 706h5v5l-5-.7zM19 706h7v6.800l-7-1z" fill="#e8eef2"/>
<rect x="38" y="689" width="271" height="31" fill="#f2f2f2"/>
<circle cx="55" cy="703" r="4.500" fill="none" stroke="#222" stroke-width="1.200"/><path d="M52 707l-4 4.500" stroke="#222" stroke-width="1.300"/>
<text x="70" y="709" style="font-size:11.500px;fill:#333" textLength="101">Type here to search</text>
<circle cx="328" cy="705" r="4.800" fill="none" stroke="#fff" stroke-width="1.500"/>
<path d="M360 699h9v2h-9zM360 703.500h9v5h-9zM360 711h9v2h-9zM372 699v14" fill="none" stroke="#dde" stroke-width="1"/>
<path d="M398 698h7l2 3h8v14h-17z" fill="#f0c040"/><rect x="398" y="703" width="17" height="6" fill="#f7d878"/><rect x="403" y="708" width="7" height="6" fill="#4a90c8"/>
<rect x="436" y="696" width="19" height="19" fill="#1178d4"/><text x="445.500" y="708" text-anchor="middle" style="font-size:5px;fill:#9cc">A</text>
<path d="M478 698c3-3 9-3 11 0 2 4 2 14-1 17-3 2-8 2-10-1-2-5-2-13 0-16z" fill="#f4c07a" stroke="#f4e2c4" stroke-width="1.500"/>
<text x="483.500" y="710" text-anchor="middle" style="font-size:10px;fill:#b86a10;font-weight:bold">S</text>
<circle cx="522.500" cy="705" r="9.500" fill="#1e9fd8"/><path d="M514 708c2-6 10-8 15-4 3 3 2 5-2 5h-3c3 3 6 3 8 2-2 4-7 5-11 4-4-1-7-4-7-7z" fill="#1e3340"/><path d="M516 714c5 3 11 2 15-3" stroke="#58d36a" stroke-width="2" fill="none"/>
<rect x="556" y="697" width="15" height="17" fill="#1f9a5a"/><rect x="552" y="700" width="12" height="12" fill="#107c41"/><text x="558" y="709.500" text-anchor="middle" style="font-size:8px;fill:#fff;font-weight:bold">X</text>
<path d="M591 702l9-7 9 7v13h-18z" fill="#3aa8e0"/><path d="M591 702l9 7 9-7" fill="#bde4f6" stroke="#e8f6fc"/>
<rect x="631" y="697" width="17" height="17" fill="#2b7cd3"/><rect x="629" y="700" width="12" height="12" fill="#185abd"/><text x="635" y="709.500" text-anchor="middle" style="font-size:8px;fill:#fff;font-weight:bold">W</text>
<circle cx="677.500" cy="705" r="4.500" fill="none" stroke="#fff" stroke-width="3"/><circle cx="677.500" cy="705" r="7" fill="none" stroke="#fff" stroke-width="2" stroke-dasharray="2.500 3"/>
<circle cx="717" cy="705" r="8.500" fill="#e2512e"/><rect x="708" y="700" width="11" height="11" fill="#b7301a"/><text x="713.500" y="709" text-anchor="middle" style="font-size:8px;fill:#fff;font-weight:bold">P</text>
<g fill="#6fb3e6"><rect x="391" y="718.500" width="32" height="1.500"/><rect x="507" y="718.500" width="31" height="1.500"/><rect x="546" y="718.500" width="31" height="1.500"/><rect x="584" y="718.500" width="32" height="1.500"/><rect x="623" y="718.500" width="31" height="1.500"/><rect x="661" y="718.500" width="32" height="1.500"/><rect x="697" y="718.500" width="38" height="1.500"/></g>
<g fill="none" stroke="#dfe6ea" stroke-width="1">
<path d="M829 708l5-5 5 5"/>
<rect x="857" y="698" width="5" height="10" rx="2.500" fill="#dfe6ea"/><path d="M855 705c0 6 9 6 9 0M859.500 710v3M857 713.500h5"/>
<path d="M881 711c1-5 5-9 10-10M884 711c1-3 3-5 6-6M887 711c.5-1 1.500-2 3-2"/><path d="M890 709l3 3"/>
<path d="M905 703h2l3-3v10l-3-3h-2zM913 703l4 4M917 703l-4 4"/>
<rect x="931" y="702" width="11" height="6" fill="#dfe6ea"/><path d="M930 699l5 2M942 704h2"/>
<path d="M960 711l9-11 2 1-5 9-4 3zM963 703c2-2 4 0 3 2"/>
<path d="M1047 698h13v9h-5l-3 3v-3h-5zM1049 701h9M1049 704h7" fill="#1e3340"/>
</g>
<text x="998" y="701" style="font-size:9px;fill:#e4eaee" textLength="21">09:34</text>
<text x="985" y="715" style="font-size:9px;fill:#e4eaee" textLength="48">22/01/2021</text>
<circle cx="1058" cy="712" r="5" fill="#1e3340" stroke="#dfe6ea" stroke-width=".8"/><text x="1058" y="714.500" text-anchor="middle" style="font-size:7px;fill:#e4eaee">3</text>
</svg>
<script>document.querySelectorAll('text[textLength]').forEach(function(t){t.setAttribute('lengthAdjust','spacingAndGlyphs')});</script>
</body></html>
